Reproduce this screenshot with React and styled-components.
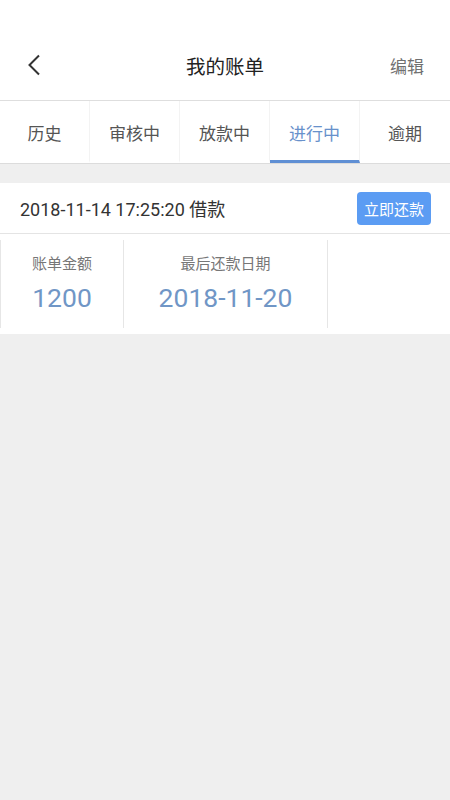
import React from "react";
import styled, { createGlobalStyle } from "styled-components";

const Global = createGlobalStyle`
  html, body { margin: 0; padding: 0; }
  body {
    background: #efefef;
    font-family: "Noto Sans CJK SC", "Noto Sans", sans-serif;
  }
`;

const Page = styled.div`
  width: 450px;
  min-height: 800px;
  background: #efefef;
`;

const Header = styled.div`
  height: 101px;
  background: #fff;
  border-bottom: 1px solid #dedede;
  box-sizing: border-box;
  display: grid;
  grid-template-columns: 90px 1fr 90px;
  align-items: center;
  padding-top: 30px;
`;

const Back = styled.div`
  padding-left: 26px;
  display: flex;
  align-items: center;
`;

const Title = styled.div`
  text-align: center;
  font-size: 19.5px;
  color: #222;
`;

const Edit = styled.div`
  text-align: right;
  padding-right: 26px;
  font-size: 17px;
  color: #707070;
`;

const Tabs = styled.div`
  display: grid;
  grid-template-columns: repeat(5, 1fr);
  background: #fff;
  height: 63px;
  border-bottom: 1px solid #dcdcdc;
  box-sizing: border-box;
`;

const Tab = styled.div`
  display: flex;
  align-items: center;
  justify-content: center;
  font-size: 17px;
  color: ${(p) => (p.$active ? "#6891cb" : "#555")};
  border-right: ${(p) => (p.$last ? "none" : "1px solid #f3f3f3")};
  border-bottom: 3px solid ${(p) => (p.$active ? "#5f8fd4" : "transparent")};
  padding-top: 3px;
  box-sizing: border-box;
`;

const Card = styled.div`
  margin-top: 19px;
  background: #fff;
`;

const CardHead = styled.div`
  height: 51px;
  box-sizing: border-box;
  display: flex;
  align-items: center;
  justify-content: space-between;
  padding: 0 19px 0 20px;
  border-bottom: 1px solid #e4e4e4;
`;

const HeadText = styled.div`
  font-size: 18px;
  color: #333;
  font-family: "Roboto", "Noto Sans CJK SC", sans-serif;
`;

const PayBtn = styled.button`
  width: 74px;
  height: 33px;
  border: none;
  border-radius: 4px;
  background: #5b9cf3;
  color: #fff;
  font-size: 15px;
  font-family: inherit;
  padding: 0;
`;

const Stats = styled.div`
  display: flex;
  height: 100px;
  padding: 6px 0;
  box-sizing: border-box;
`;

const Stat = styled.div`
  width: ${(p) => p.$w}px;
  box-sizing: border-box;
  display: flex;
  flex-direction: column;
  align-items: center;
  justify-content: center;
  gap: 8px;
  border-right: 1px solid #e6e6e6;
  border-left: ${(p) => (p.$first ? "1px solid #e6e6e6" : "none")};
  padding-bottom: 2px;
`;

const Label = styled.div`
  font-size: 15px;
  color: #777;
`;

const Value = styled.div`
  font-size: 26.5px;
  line-height: 34px;
  color: #7096c6;
  font-family: "Roboto", "Noto Sans", sans-serif;
`;

export default function App() {
  const tabs = ["历史", "审核中", "放款中", "进行中", "逾期"];
  return (
    <Page>
      <Global />
      <Header>
        <Back>
          <svg width="16" height="22" viewBox="0 0 16 22">
            <path d="M13 1.5 L3.5 11 L13 20.5" fill="none" stroke="#333" strokeWidth="2" />
          </svg>
        </Back>
        <Title>我的账单</Title>
        <Edit>编辑</Edit>
      </Header>
      <Tabs>
        {tabs.map((t, i) => (
          <Tab key={t} $active={i === 3} $last={i === 4}>
            {t}
          </Tab>
        ))}
      </Tabs>
      <Card>
        <CardHead>
          <HeadText>2018-11-14 17:25:20 借款</HeadText>
          <PayBtn>立即还款</PayBtn>
        </CardHead>
        <Stats>
          <Stat $w={124} $first>
            <Label>账单金额</Label>
            <Value>1200</Value>
          </Stat>
          <Stat $w={204}>
            <Label>最后还款日期</Label>
            <Value>2018-11-20</Value>
          </Stat>
        </Stats>
      </Card>
    </Page>
  );
}
